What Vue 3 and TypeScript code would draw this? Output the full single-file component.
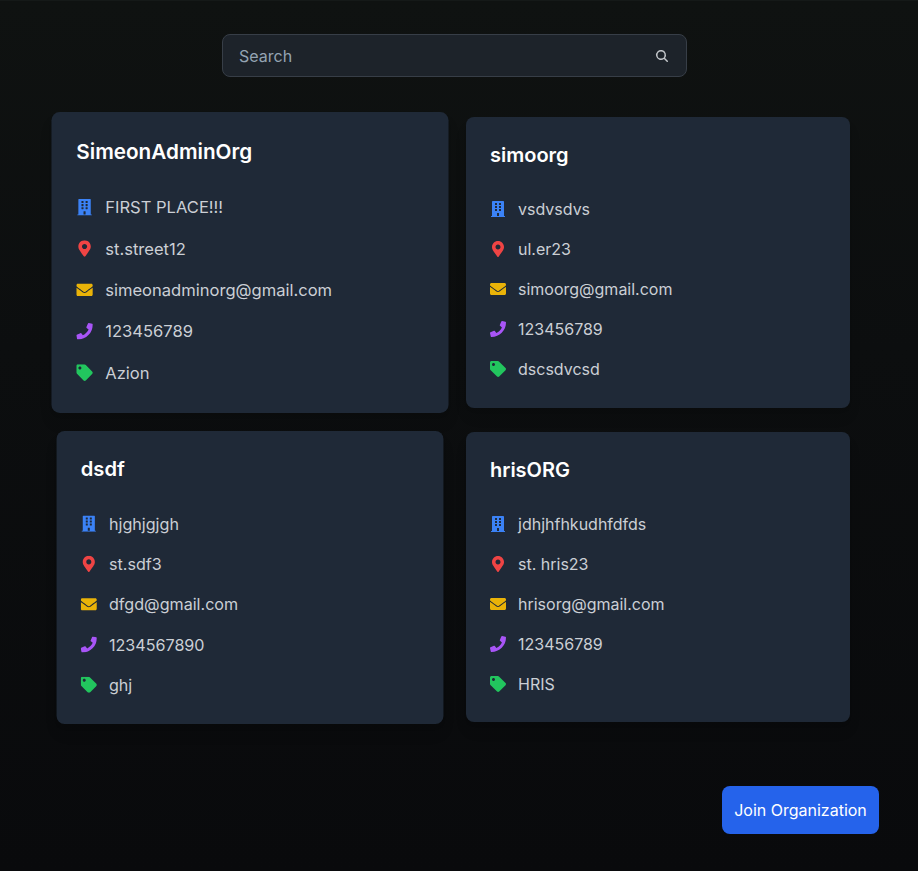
<script setup lang="ts">
import { ref, computed } from 'vue'

interface Organization {
  name: string
  description: string
  address: string
  email: string
  phone: string
  type: string
  state: string
}

type Field = 'description' | 'address' | 'email' | 'phone' | 'type'

const organizations: Organization[] = [
  { name: 'SimeonAdminOrg', description: 'FIRST PLACE!!!', address: 'st.street12', email: 'simeonadminorg@gmail.com', phone: '123456789', type: 'Azion', state: 'raised' },
  { name: 'simoorg', description: 'vsdvsdvs', address: 'ul.er23', email: 'simoorg@gmail.com', phone: '123456789', type: 'dscsdvcsd', state: '' },
  { name: 'dsdf', description: 'hjghjgjgh', address: 'st.sdf3', email: 'dfgd@gmail.com', phone: '1234567890', type: 'ghj', state: 'settling' },
  { name: 'hrisORG', description: 'jdhjhfhkudhfdfds', address: 'st. hris23', email: 'hrisorg@gmail.com', phone: '123456789', type: 'HRIS', state: '' },
]

const fields: { key: Field; viewBox: string; path: string }[] = [
  {
    key: 'description',
    viewBox: '0 0 448 512',
    path: 'M436 480h-20V24c0-13.255-10.745-24-24-24H56C42.745 0 32 10.745 32 24v456H12c-6.627 0-12 5.373-12 12v20h448v-20c0-6.627-5.373-12-12-12zM128 76c0-6.627 5.373-12 12-12h40c6.627 0 12 5.373 12 12v40c0 6.627-5.373 12-12 12h-40c-6.627 0-12-5.373-12-12V76zm0 96c0-6.627 5.373-12 12-12h40c6.627 0 12 5.373 12 12v40c0 6.627-5.373 12-12 12h-40c-6.627 0-12-5.373-12-12v-40zm52 148h-40c-6.627 0-12-5.373-12-12v-40c0-6.627 5.373-12 12-12h40c6.627 0 12 5.373 12 12v40c0 6.627-5.373 12-12 12zm76 160h-64v-84c0-6.627 5.373-12 12-12h40c6.627 0 12 5.373 12 12v84zm64-172c0 6.627-5.373 12-12 12h-40c-6.627 0-12-5.373-12-12v-40c0-6.627 5.373-12 12-12h40c6.627 0 12 5.373 12 12v40zm0-96c0 6.627-5.373 12-12 12h-40c-6.627 0-12-5.373-12-12v-40c0-6.627 5.373-12 12-12h40c6.627 0 12 5.373 12 12v40zm0-96c0 6.627-5.373 12-12 12h-40c-6.627 0-12-5.373-12-12V76c0-6.627 5.373-12 12-12h40c6.627 0 12 5.373 12 12v40z',
  },
  {
    key: 'address',
    viewBox: '0 0 384 512',
    path: 'M172.268 501.67C26.97 291.031 0 269.413 0 192 0 85.961 85.961 0 192 0s192 85.961 192 192c0 77.413-26.97 99.031-172.268 309.67-9.535 13.774-29.93 13.773-39.464 0zM192 272c44.183 0 80-35.817 80-80s-35.817-80-80-80-80 35.817-80 80 35.817 80 80 80z',
  },
  {
    key: 'email',
    viewBox: '0 0 512 512',
    path: 'M502.3 190.8c3.9-3.1 9.7-.2 9.7 4.7V400c0 26.5-21.5 48-48 48H48c-26.5 0-48-21.5-48-48V195.6c0-5 5.7-7.8 9.7-4.7 22.4 17.4 52.1 39.5 154.1 113.6 21.1 15.4 56.7 47.8 92.2 47.6 35.7.3 72-32.8 92.3-47.6 102-74.1 131.6-96.3 154-113.7zM256 320c23.2.4 56.6-29.2 73.4-41.4 132.7-96.3 142.8-104.7 173.4-128.7 5.8-4.5 9.2-11.5 9.2-18.9v-19c0-26.5-21.5-48-48-48H48c-26.5 0-48 21.5-48 48v19c0 7.4 3.4 14.3 9.2 18.9 30.6 23.9 40.7 32.4 173.4 128.7 16.8 12.2 50.2 41.8 73.4 41.4z',
  },
  {
    key: 'phone',
    viewBox: '0 0 512 512',
    path: 'M493.4 24.6l-104-24c-11.3-2.6-22.9 3.3-27.5 13.9l-48 112c-4.2 9.8-1.4 21.3 6.9 28l60.6 49.6c-36 76.7-98.9 140.5-177.2 177.2l-49.6-60.6c-6.8-8.3-18.2-11.1-28-6.9l-112 48C3.9 366.5-2 378.1.6 389.4l24 104C27.1 504.2 36.7 512 48 512c256.1 0 464-207.5 464-464 0-11.2-7.7-20.9-18.6-23.4z',
  },
  {
    key: 'type',
    viewBox: '0 0 512 512',
    path: 'M0 252.118V48C0 21.49 21.49 0 48 0h204.118a48 48 0 0 1 33.941 14.059l211.882 211.882c18.745 18.745 18.745 49.137 0 67.882L293.823 497.941c-18.745 18.745-49.137 18.745-67.882 0L14.059 286.059A48 48 0 0 1 0 252.118zM112 64c-26.51 0-48 21.49-48 48s21.49 48 48 48 48-21.49 48-48-21.49-48-48-48z',
  },
]

const query = ref('')
const visible = computed(() =>
  organizations.filter((o) => o.name.toLowerCase().includes(query.value.toLowerCase())),
)
</script>

<template>
  <main class="page">
    <label class="search">
      <input v-model="query" class="search-input" type="text" placeholder="Search" />
      <svg class="search-icon" viewBox="0 0 16 16" fill="currentColor">
        <path fill-rule="evenodd" clip-rule="evenodd" d="M9.965 11.026a5 5 0 1 1 1.06-1.06l2.755 2.754a.75.75 0 1 1-1.06 1.06l-2.755-2.754ZM10.5 7a3.5 3.5 0 1 1-7 0 3.5 3.5 0 0 1 7 0Z" />
      </svg>
    </label>

    <section class="grid">
      <article v-for="org in visible" :key="org.name" class="card" :class="org.state">
        <h2 class="name">{{ org.name }}</h2>
        <ul class="details">
          <li v-for="field in fields" :key="field.key" class="detail">
            <svg class="icon" :class="field.key" :viewBox="field.viewBox" fill="currentColor">
              <path :d="field.path" />
            </svg>
            <span>{{ org[field.key] }}</span>
          </li>
        </ul>
      </article>
    </section>

    <button class="join" type="button">Join Organization</button>
  </main>
</template>

<style>
body {
  background: #090a0c;
}
</style>

<style scoped>
.page {
  box-sizing: border-box;
  display: flex;
  flex-direction: column;
  height: 871px;
  padding: 33px 39px 37px 58px;
  border-top: 1px solid #151918;
  background: linear-gradient(to bottom, #0f1211, #0c0e0f 40%, #090a0c);
  font-family: Inter, 'Liberation Sans', sans-serif;
  font-size: 16px;
  line-height: 24px;
}

.search {
  box-sizing: border-box;
  display: flex;
  align-items: center;
  gap: 8px;
  width: 465px;
  height: 43px;
  margin-left: 164px;
  padding: 0 16px;
  border: 1px solid #373e47;
  border-radius: 8px;
  background: #1d232a;
  color: #c3c6ca;
}

.search-input {
  flex: 1;
  min-width: 0;
  padding: 0;
  border: 0;
  outline: 0;
  background: transparent;
  color: #c3c6ca;
  font: inherit;
}

.search-input::placeholder {
  color: #94a3b3;
  opacity: 1;
}

.search-icon {
  width: 16px;
  height: 16px;
}

.grid {
  display: grid;
  grid-template-columns: 384px 384px;
  gap: 24px;
  margin-top: 39.9px;
}

.card {
  box-sizing: border-box;
  height: 290.62px;
  padding: 24px;
  border-radius: 8px;
  background: #1f2937;
  box-shadow: 0 10px 15px -3px rgba(0, 0, 0, 0.1), 0 4px 6px -4px rgba(0, 0, 0, 0.1);
}

.card.raised {
  transform: scale(1.034);
}

.card.settling {
  transform: scale(1.0075);
}

.name {
  margin: 0 0 28px;
  color: #fff;
  font-size: 20px;
  font-weight: 600;
  line-height: 28px;
}

.details {
  display: flex;
  flex-direction: column;
  gap: 16px;
  margin: 0;
  padding: 0;
  list-style: none;
  color: #cbcfd5;
}

.detail {
  display: flex;
  align-items: center;
  gap: 12px;
}

.icon {
  width: 16px;
  height: 16px;
}

.description {
  color: #3b82f6;
}

.address {
  color: #ef4444;
}

.email {
  color: #eab308;
}

.phone {
  color: #a855f7;
}

.type {
  color: #22c55e;
}

.join {
  align-self: flex-end;
  width: 157px;
  height: 48px;
  margin-top: auto;
  padding: 0;
  border: 0;
  border-radius: 8px;
  background: #2563eb;
  color: #fff;
  font: inherit;
}
</style>
